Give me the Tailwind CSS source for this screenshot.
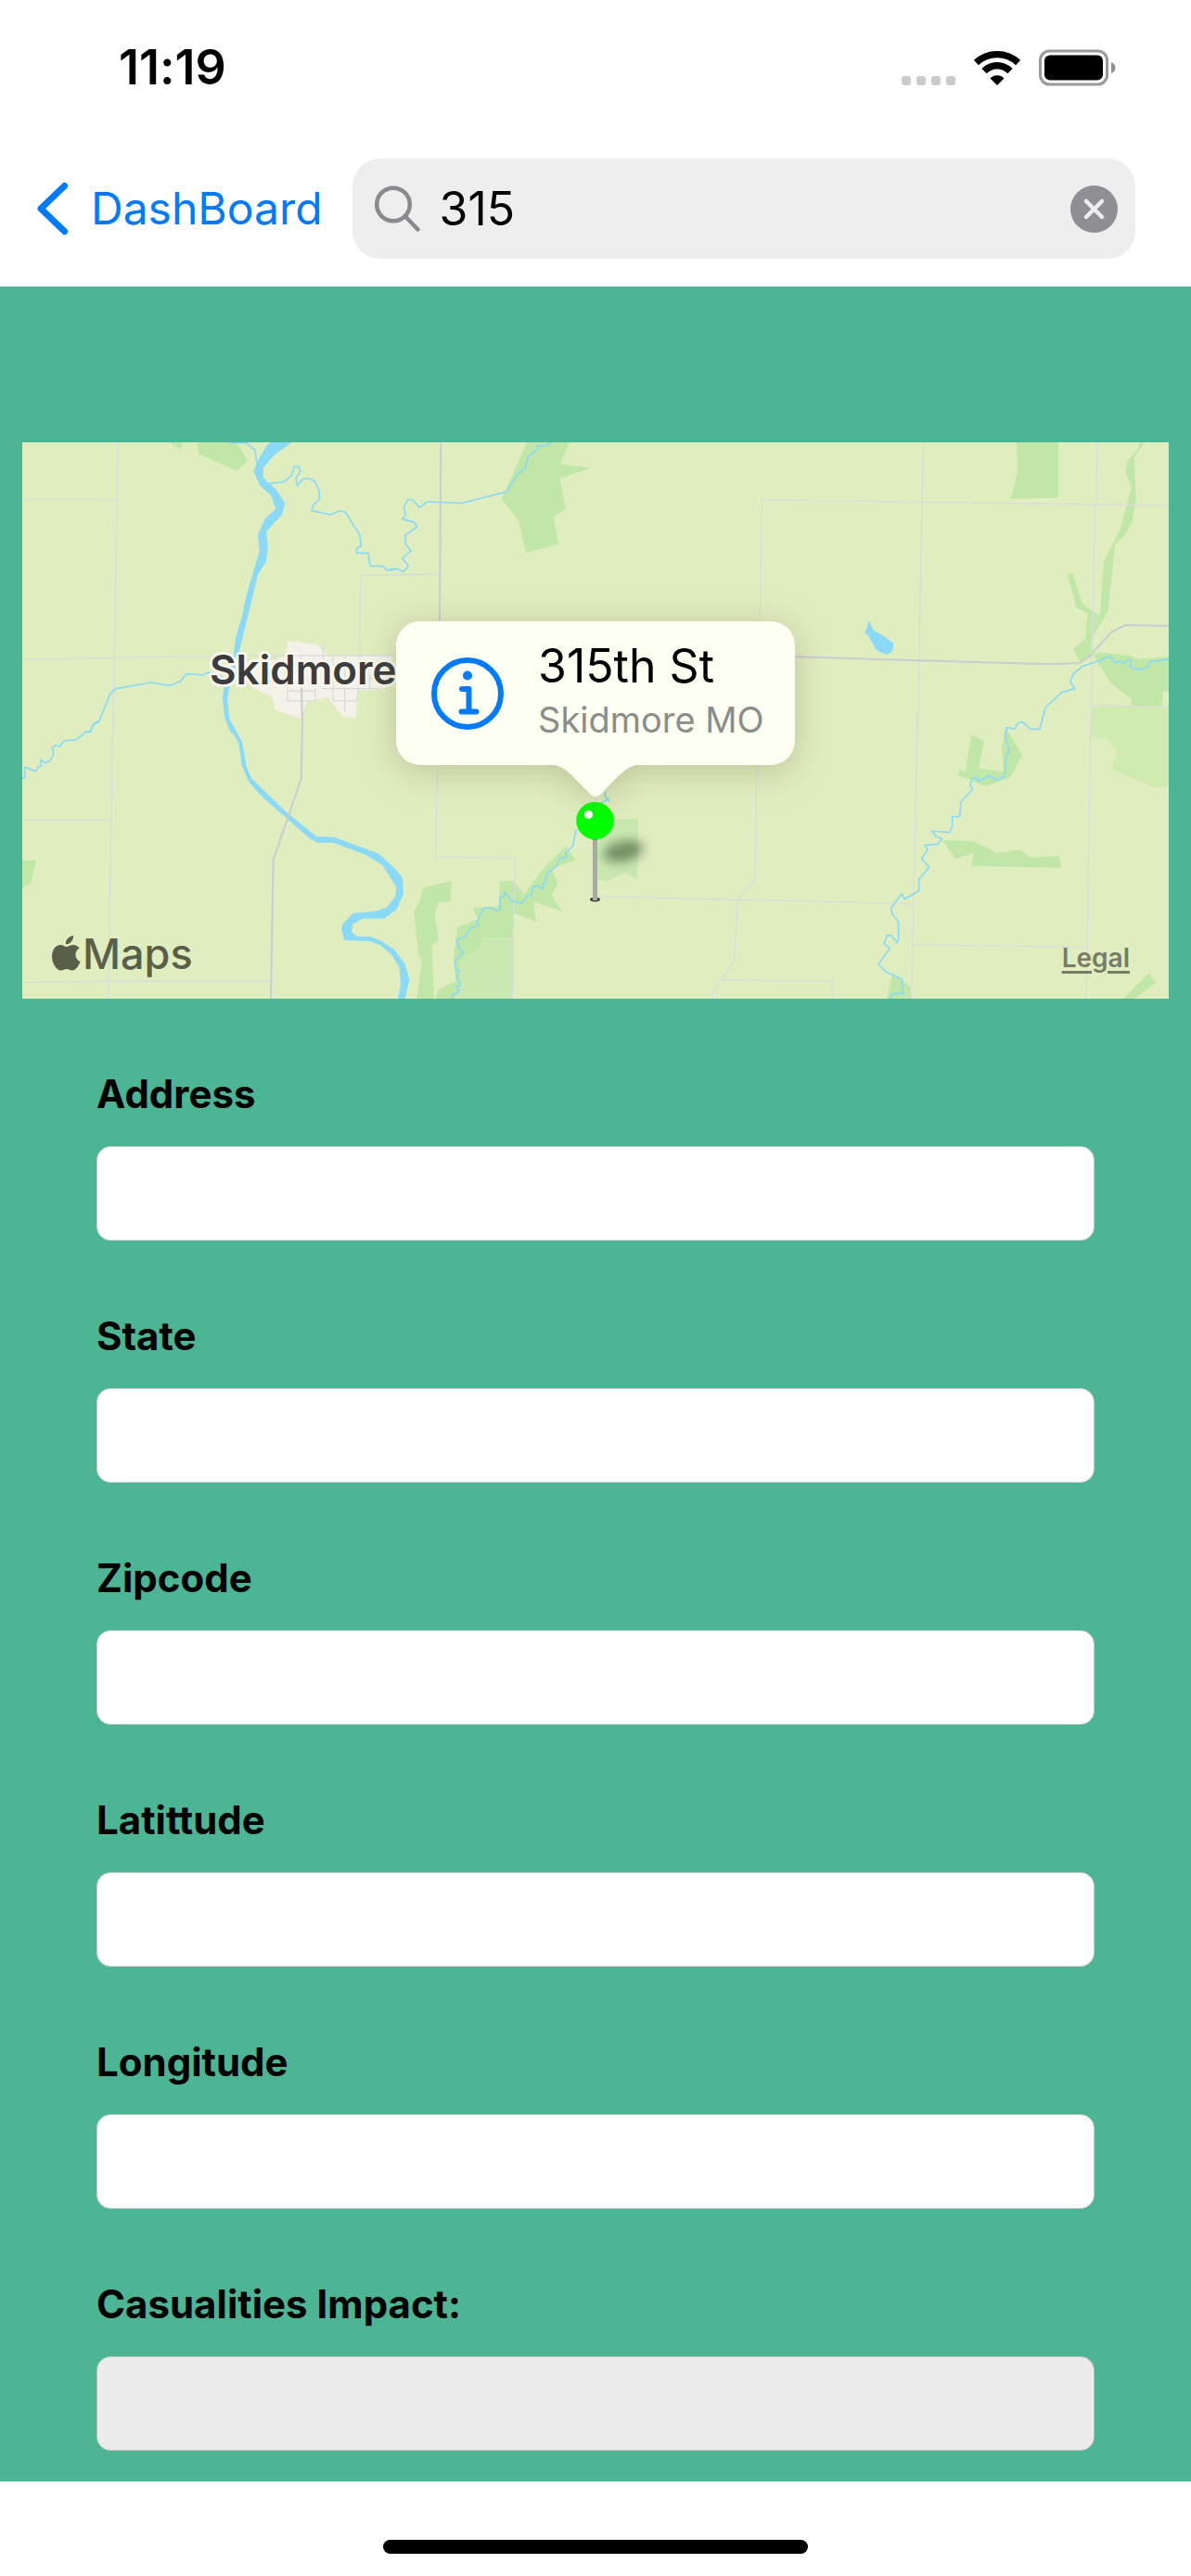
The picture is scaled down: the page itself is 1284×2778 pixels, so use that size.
<!DOCTYPE html>
<html lang="en">
<head>
<meta charset="utf-8">
<meta name="viewport" content="width=device-width, initial-scale=1">
<title>DashBoard</title>
<script src="https://cdn.jsdelivr.net/npm/@tailwindcss/browser@4"></script>
</head>
<body class="flex min-h-screen flex-col bg-white font-['Inter',sans-serif] text-black [font-variant-ligatures:none]">

  <!-- Status bar -->
  <div class="flex h-[145px] items-center justify-between pr-20 pl-32">
    <span class="text-[52px] leading-[56px] font-semibold">11:19</span>
    <div class="flex items-center gap-5">
      <svg class="h-10 w-[58px]" viewBox="0 0 58 40" fill="#cbcbcb" aria-hidden="true">
        <rect x="0" y="29" width="10" height="10" rx="3"/><rect x="16" y="29" width="10" height="10" rx="3"/><rect x="32" y="29" width="10" height="10" rx="3"/><rect x="48" y="29" width="10" height="10" rx="3"/>
      </svg>
      <svg class="h-10 w-[50px]" viewBox="0 0 50 40" fill="none" stroke="#000" stroke-width="7.4" aria-hidden="true">
        <path d="M2.4 14.6C15 2.6 35 2.6 47.600 14.600"/>
        <path d="M11 23.600C19 15.800 31 15.800 39 23.600"/>
        <path d="M17.500 31.500C21 27 29 27 32.500 31.500L25 39Z" fill="#000" stroke="none"/>
      </svg>
      <svg class="h-10 w-[84px]" viewBox="0 0 84 40" aria-hidden="true">
        <rect x="1.500" y="2" width="72" height="36" rx="10" fill="none" stroke="#9a9a9a" stroke-width="3"/>
        <rect x="6" y="6.500" width="63" height="27" rx="6"/>
        <path d="M78 14q4.500 2 4.500 6t-4.500 6z" fill="#8f8f8f"/>
      </svg>
    </div>
  </div>

  <!-- Navigation bar -->
  <header class="flex h-[164px] items-start gap-8 pt-[26px] pr-[60px] pl-10">
    <a href="#" class="flex h-[108px] items-center gap-6 text-[#007aff]">
      <svg class="h-[58px] w-[34px]" viewBox="0 0 34 58" fill="none" stroke="currentColor" stroke-width="7" stroke-linecap="round" stroke-linejoin="round" aria-hidden="true"><path d="M29.500 4.500L4 29l25.500 24.500"/></svg>
      <span class="text-[48px] leading-[60px]">DashBoard</span>
    </a>
    <div class="flex h-[108px] min-w-0 flex-1 items-center rounded-[30px] bg-[#eeeeef] pr-[19px] pl-6">
      <svg class="size-[50px] shrink-0" viewBox="0 0 50 50" fill="none" stroke="#8a8a8e" stroke-width="4.500" stroke-linecap="round" aria-hidden="true"><circle cx="20" cy="20.500" r="17.800"/><path d="M33 33.500L46.500 47.500"/></svg>
      <input type="text" value="315" aria-label="Search" class="ml-5 min-w-0 flex-1 bg-transparent text-[50px] leading-[60px] outline-none">
      <button type="button" aria-label="Clear search" class="size-[51px] shrink-0">
        <svg viewBox="0 0 51 51" fill="none" aria-hidden="true"><circle cx="25.500" cy="25.500" r="25.500" fill="#8e8e93"/><path d="M17 17l17 17M34 17L17 34" stroke="#eeeeef" stroke-width="4.500" stroke-linecap="round"/></svg>
      </button>
    </div>
  </header>

  <main class="flex-1 bg-[#4bb594] pt-[168px]">
    <!-- Map -->
    <section aria-label="Map" class="relative mx-6 h-[600px] overflow-hidden bg-[#e0edbf]">
      <svg class="block size-full" viewBox="0 0 1236 600" preserveAspectRatio="xMidYMid slice" fill="none" aria-hidden="true">
        <g transform="scale(.33333)" stroke-linejoin="round">
          <!-- Woodland and parks -->
          <g fill="#c1e7a8">
            <g transform="translate(-72 -51)">
              <path d="M555 50h37l-7 23-30-15zM641 50h125l34 60-35 34-124-56z"/>
            </g>
            <g transform="translate(1188 -51)">
              <path d="M444 50h139l-32 71 99 13-99 33 18 100-37 24 13 90-104 28-24-105-55-70 14-30z"/>
            </g>
            <g transform="translate(2478 -51)">
              <path d="M738 50H873V230L719 234L741 145Z"/>
              <path d="M1134 50L1133 70L1096 112L1091 152L1110 195L1073 332L1020 437L1007 612L950 573L920 475L903 481L931 586L968 606L960 688L921 720L945 762L980 745V686L1033 598L1057 380L1083 358L1110 314L1124 235L1118 100L1152 50Z"/>
              <path d="M985 738L1005 730L1107 742L1133 752L1230 745V856H1212L1209 905H1106L1110 883L1045 832Z"/>
            </g>
            <g transform="translate(-72 909)"><path d="M70 444h47l-18 75-29 13z"/></g>
            <g transform="translate(1188 909)">
              <path d="M201 511L196 579L159 576L146 620L159 698L136 722L144 892H87L106 769L93 749L79 609L98 572L107 534L150 521Z"/>
              <path d="M357 510h44l33 42 72-93 65-61 31 44-79 28 22 49-21 37 34 52-93-31 9 64-74-27-3 79v200H146l13-31 55-29-7-70 13-104 66-26-19-36 86-5z"/>
              <path d="M296 693h103v199H210l20-60-5-60 71-50z" fill="#cae9b1"/>
              <path d="M670 313l135-5-4 199-39-24-60 31-32-9z" fill="#c9e8b0"/>
            </g>
            <g transform="translate(2478 909)">
              <path d="M591 38L633 57L615 147L695 156L690 75L707 20L756 103L719 174L638 203L549 169L552 147L573 156Z"/>
              <path d="M497 378L597 382L675 419L745 410L785 434L875 429L883 467L591 462L599 420L540 439ZM337 808l60 46v38h-79zM1166 808l23 30-70 54h-37z"/>
              <path d="M985-53H1231V204L1186 208L1044 147L1062 95L1034 51L979 42Z" fill="#d0ebb0"/>
            </g>
          </g>
          <!-- Town -->
          <path d="M929 692L1027 706L1060 742H1268V830L1230 851H1157L1151 941H1112L1060 876L994 888L972 944L890 917L881 876L820 845L770 790L929 742Z" transform="translate(-72 -51)" fill="#f4f1e9"/>
          <!-- Minor roads -->
          <g stroke="#dadcdb" stroke-width="4">
            <g transform="translate(-72 -51)">
              <path d="M380 50l-2 186-8 500-5 260M70 236h310M70 754l300-6 330-5M1290 480l-123 2-8 370-6 35h-76V742M760 741h520M930 848v39h92l-4-39M890 742v40M974 742v110M1045 706v72M1115 742v180M1196 800v50M930 815h340M1040 848h190M930 855h90"/>
            </g>
            <g transform="translate(1188 -51)"><path d="M-2 480l166-3M1292 238l-87-2-7 396"/></g>
            <g transform="translate(2478 -51)"><path d="M0 238l433 6 560 8 237 4M436 50l-4 200-14 750M998 50l-2 202h-5l-12 748M978 902l252 6"/></g>
            <g transform="translate(-72 909)"><path d="M366-20l-9 460-7 460M70 314h293M70 839l290-5h516"/></g>
            <g transform="translate(1188 909)"><path d="M155 135l-7 298 259 4-7 240-2 220M670 560l457 11 163 3M1188 135L1182 507L1126 575L1115 768L1045 872V895M1075 829l217 6M668 240v20"/></g>
            <g transform="translate(2478 909)"><path d="M417-20l-12 610-7 305M0 574l405 10M402 716l564 9M978-30l-10 640-5 285M0 835h142v60"/></g>
          </g>
          <!-- Rivers and creeks -->
          <g stroke="#8adaf7" stroke-width="5">
            <g transform="translate(-72 -51)">
              <path d="M740 53h57l28 24 6 45M870 185l50-7 22-19 10-30h14l5 15-14 24 5 24 18-23h20l19 9 14 32v25l-20 19-5 18 61 13 29-12 18 3 48 76 4 34-15 9v14h38l6 40 8 3h34l14 14 28-4"/>
              <path d="M720 810l-43-15-22 9-52-4-19 24-34 14-61-10-114 20-18 14-37 93-19 10-10 23h-18"/>
              <path d="M876 50L862 62L835 108L820 145L840 190L878 225L892 268L858 296L834 350L839 405L818 475L797 545L784 610L763 680L755 745L745 780L724 845L720 880L726 940L746 990H764L742 945L735 880L742 845L760 780L772 735L805 600L833 480L861 437L866 390L862 338L912 285L922 248L895 206L851 165V134L887 92L945 50Z" fill="#8adaf7" stroke="none"/>
            </g>
            <g transform="translate(1188 -51)">
              <path d="M-2 463l25-3 22 10 16-20-20-23 28-25-18-22v-29l38-26-9-15-39-11 10-12-5-27 13-23h15l23 25 25-19 111 5 144-37 36-55 25-21 10-36 29-25 5-13h27l26-17"/>
            </g>
            <g transform="translate(2478 -51)">
              <path d="M261 627L275 659L307 677L340 701L337 727L317 738L285 724L257 675L247 670Z" fill="#8adaf7" stroke="none"/>
              <path d="M702 1000l3-26 28 4 9-18 14-4 28 23h29l18-70 53-49 42-12-14-23 9-24 28-24 91-33 14 19 20-4 10 8 14-14 11 5-5 19 28 10 29-9 9-18 55-6 10-7"/>
            </g>
            <g transform="translate(-72 909)">
              <path d="M318-8l-15 10-11 26h-15l-28 24-42 5-14 19-14-5-10 9 5 19-14 24-14 5-14-10 2 20-12 4-5 14-37-14v34l-10 3"/>
              <path d="M735 0L772 65L783 140L805 190L850 240L930 310L1003 374L1027 386H1078L1178 424L1236 458L1282 530L1278 560L1250 596L1210 609L1142 614L1108 650L1104 668L1114 702L1197 705L1230 718L1265 748L1292 790L1296 845L1286 892H1310L1324 828L1310 780L1276 732L1230 703L1197 690H1155L1138 675L1140 650L1173 632H1241L1283 603L1305 552L1302 500L1282 475L1226 422L1080 368L1023 366L930 290L858 222L812 176L797 140L783 60L750 0Z" fill="#8adaf7" stroke="none"/>
            </g>
            <g transform="translate(1188 909)">
              <path d="M697 220v15l14 16-8-4-22 12M608 345l-6 4-9 47-24 24 5 12-24 7-10 24-28 20-19 56-10-14-19 4-5 28-9-2-24 28-33-10-20-26-4 13-12 4v38l-8 4-24-9h-19l-24 43 5 13-24 10-19 28-28 10 9 28 14 14-24 20-4 14 5 23h9l-8 20 13 28-13 4 9 15-19 10-10 20"/>
            </g>
            <g transform="translate(2478 909)">
              <path d="M705 13l-5 31 14 42-9 23-6 62-24 13-28-14-33 18-4-13-14 4-9 20 9 14-38 42-4 47h-24v33l-9 18-57-4 14 18 19 6-14 18-43 4 10 15-19 28 24 28-33 38v38l-47 27-9-18-34 47 4 20 20 24v60l-4 8-19-24h-14l-9 28 18 14-37 52 24 24 52 24 4 47h-33l-9 10 4 15"/>
            </g>
          </g>
          <!-- Highways -->
          <g stroke="#cbcbd3" stroke-width="6">
            <path d="M166 50l-4 590" transform="translate(1188 -51)"/>
            <path d="M0 744l420 13 430 12 90-4 30-18 75-82 45-23 141 3" transform="translate(2478 -51)"/>
            <path d="M975-114l3 114-4 180-90 262-8 450" transform="translate(-72 909)"/>
          </g>
        </g>
        <text x="202" y="261" font-size="44" font-weight="600" fill="#3c3c3c" stroke="#f7f7ee" stroke-width="6" stroke-linejoin="round" paint-order="stroke">Skidmore</text>
      </svg>

      <!-- Pin -->
      <svg class="absolute top-[380px] left-1/2 h-[130px] w-[160px] -translate-x-1/2" viewBox="0 0 160 130" aria-hidden="true">
        <defs>
          <filter id="soft" x="-50%" y="-80%" width="200%" height="260%"><feGaussianBlur stdDeviation="6"/></filter>
        </defs>
        <ellipse cx="110" cy="61" rx="22" ry="11" fill="#45603a" opacity=".65" transform="rotate(-12 110 61)" filter="url(#soft)"/>
        <ellipse cx="79.500" cy="113" rx="5.500" ry="2.500" fill="#3c3c34"/>
        <rect x="77" y="44" width="5" height="70" fill="#a9a9ab"/>
        <rect x="77" y="44" width="5" height="5" fill="#7d7d80"/>
        <circle cx="79.500" cy="28" r="20.300" fill="#00ff00"/>
        <circle cx="72.500" cy="21.500" r="4.600" fill="#fff"/>
      </svg>

      <!-- Callout -->
      <div class="absolute top-[193px] left-1/2 flex h-[155px] w-[430px] -translate-x-1/2 items-center gap-[37px] rounded-[26px] bg-[#fcfff2] pl-[38px] drop-shadow-[0_6px_18px_rgba(90,90,50,0.28)]">
        <svg class="absolute top-[154px] left-1/2 h-9 w-[104px] -translate-x-1/2" viewBox="0 0 104 36" fill="#fcfff2" aria-hidden="true"><path d="M0 0C18 0 26 12 43 29Q52 41 61 29C78 12 86 0 104 0Z"/></svg>
        <svg class="size-[78px] shrink-0" viewBox="0 0 78 78" fill="none" stroke="#007aff" stroke-width="6" stroke-linecap="round" stroke-linejoin="round" role="img" aria-label="Info"><circle cx="39" cy="39" r="36"/><circle cx="39" cy="19.500" r="5" fill="#007aff" stroke="none"/><path d="M33 34h7.500v24M32.500 58.500h16"/></svg>
        <div class="pb-1.5 whitespace-nowrap">
          <h2 class="text-[50px] leading-[60px]">315th St</h2>
          <p class="mt-0.5 text-[38px] leading-[52px] text-[#8b8d88]">Skidmore MO</p>
        </div>
      </div>

      <!-- Attribution -->
      <div class="absolute bottom-5 left-8 flex items-center gap-0.5 text-[#5a5f4a]">
        <svg class="h-10 w-[31px]" viewBox="0 0 31 40" fill="currentColor" aria-hidden="true"><path d="M23 0c.5 5-3.500 9.500-8 9.300C14.500 4.500 18.500.5 23 0zM15.500 12c2 0 4-2 7.500-2 2.800 0 5 1.300 6.500 3.500-6 3.500-5 12 1 14.500-1 3-4.500 9.500-8.500 9.500-2.500 0-3.500-1.500-6-1.500s-4 1.500-6.200 1.500C5 37.500 0 30 0 22.500 0 14.500 4.500 10 9.500 10c2.500 0 4.500 2 6 2z"/></svg>
        <span class="text-[45px] leading-[56px] font-medium">Maps</span>
      </div>
      <a href="#" class="absolute right-[42px] bottom-[28px] text-[28px] leading-8 font-semibold text-[#777c67] underline decoration-3 underline-offset-4">Legal</a>
    </section>

    <!-- Location details -->
    <form class="flex flex-col gap-[77px] px-[104px] pt-[77px] pb-[33px]">
      <div class="flex flex-col gap-[30px]">
        <label for="address" class="text-[42px] leading-[52px] font-bold">Address</label>
        <input id="address" type="text" class="h-[102px] w-full rounded-[15px] border border-[#c8cccb] bg-white px-5 text-[42px]">
      </div>
      <div class="flex flex-col gap-[30px]">
        <label for="state" class="text-[42px] leading-[52px] font-bold">State</label>
        <input id="state" type="text" class="h-[102px] w-full rounded-[15px] border border-[#c8cccb] bg-white px-5 text-[42px]">
      </div>
      <div class="flex flex-col gap-[30px]">
        <label for="zipcode" class="text-[42px] leading-[52px] font-bold">Zipcode</label>
        <input id="zipcode" type="text" class="h-[102px] w-full rounded-[15px] border border-[#c8cccb] bg-white px-5 text-[42px]">
      </div>
      <div class="flex flex-col gap-[30px]">
        <label for="latitude" class="text-[42px] leading-[52px] font-bold">Latittude</label>
        <input id="latitude" type="text" class="h-[102px] w-full rounded-[15px] border border-[#c8cccb] bg-white px-5 text-[42px]">
      </div>
      <div class="flex flex-col gap-[30px]">
        <label for="longitude" class="text-[42px] leading-[52px] font-bold">Longitude</label>
        <input id="longitude" type="text" class="h-[102px] w-full rounded-[15px] border border-[#c8cccb] bg-white px-5 text-[42px]">
      </div>
      <div class="flex flex-col gap-[30px]">
        <label for="casualties" class="text-[42px] leading-[52px] font-bold">Casualities Impact:</label>
        <input id="casualties" type="text" disabled class="h-[102px] w-full rounded-[15px] border border-[#bcbfbe] bg-[#ececec] px-5 text-[42px]">
      </div>
    </form>
  </main>

  <!-- Home indicator -->
  <footer class="flex h-[102px] items-end justify-center pb-6">
    <div class="h-[15px] w-[458px] rounded-full bg-black"></div>
  </footer>
</body>
</html>
